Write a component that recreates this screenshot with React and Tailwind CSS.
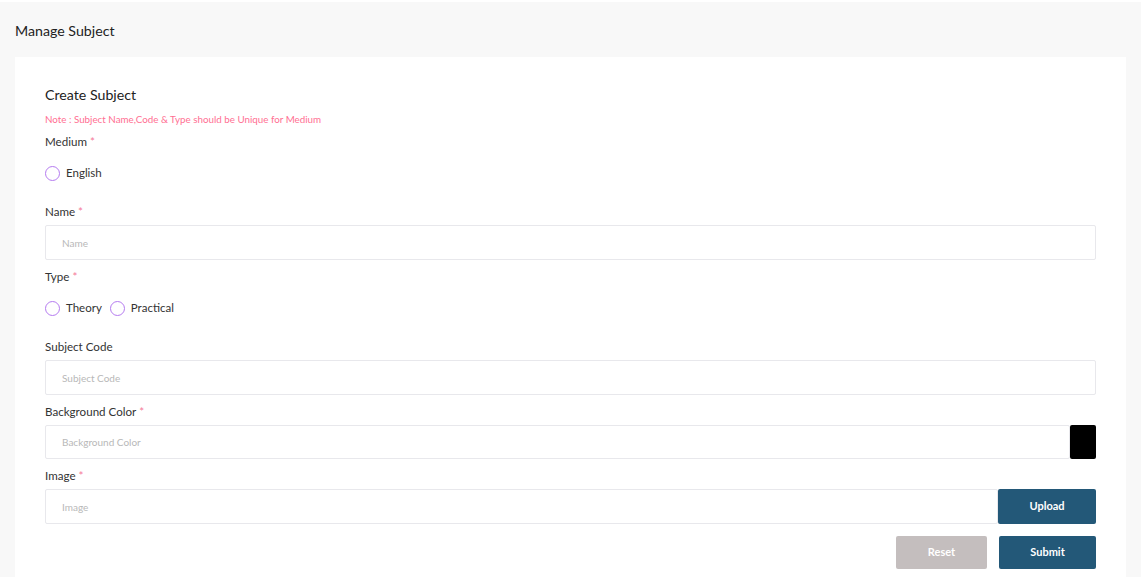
import { useState } from 'react';

function Label({ text, required }) {
  return (
    <div className="h-[14px] text-[11.6px] leading-[14px] text-[#333]">
      {text}
      {required && <span className="ml-[3px] text-[#f57a9a]">*</span>}
    </div>
  );
}

function Radio({ label, checked, onChange }) {
  return (
    <label className="flex items-center gap-[6px] cursor-pointer">
      <span
        className={`w-[15px] h-[15px] rounded-full border-[1.5px] border-[#b57bf0] ${checked ? 'bg-[#b57bf0]' : 'bg-white'}`}
        onClick={onChange}
      />
      <span className="text-[11.5px] leading-[16px] text-[#333]">{label}</span>
    </label>
  );
}

function TextInput({ placeholder, tall = true, className = '' }) {
  return (
    <input
      placeholder={placeholder}
      className={`${tall ? 'h-[35px]' : 'h-[34px]'} border border-[#e8e8ec] rounded-[2px] px-[16px] text-[10px] text-[#333] placeholder:text-[#b8b8b8] outline-none ${className}`}
    />
  );
}

export default function App() {
  const [medium, setMedium] = useState('');
  const [type, setType] = useState('');

  return (
    <div
      className="min-h-[577px] bg-[#f8f8f8] border-t-2 border-white"
      style={{ fontFamily: 'Lato, "Noto Sans", sans-serif' }}
    >
      <div className="h-[55px] px-[15px] pt-[20px]">
        <h1 className="text-[14.2px] leading-[18px] text-[#222]">Manage Subject</h1>
      </div>

      <div className="mx-[15px] bg-white px-[30px] pt-[28px] pb-[10px] flex flex-col">
        <h2 className="h-[20px] text-[14.2px] leading-[20px] text-[#222]">Create Subject</h2>
        <p className="mt-[7px] h-[14px] text-[9.8px] leading-[14px] text-[#ff6f93]">
          Note : Subject Name,Code &amp; Type should be Unique for Medium
        </p>

        <div className="mt-[9px]">
          <Label text="Medium" required />
        </div>
        <div className="mt-[16px] flex gap-[9px]">
          <Radio label="English" checked={medium === 'en'} onChange={() => setMedium('en')} />
        </div>

        <div className="mt-[24px]">
          <Label text="Name" required />
        </div>
        <TextInput placeholder="Name" className="mt-[6px] w-full" />

        <div className="mt-[10px]">
          <Label text="Type" required />
        </div>
        <div className="mt-[16px] flex gap-[8px]">
          <Radio label="Theory" checked={type === 'theory'} onChange={() => setType('theory')} />
          <Radio label="Practical" checked={type === 'practical'} onChange={() => setType('practical')} />
        </div>

        <div className="mt-[24px]">
          <Label text="Subject Code" />
        </div>
        <TextInput placeholder="Subject Code" className="mt-[6px] w-full" />

        <div className="mt-[10px]">
          <Label text="Background Color" required />
        </div>
        <div className="mt-[6px] flex">
          <TextInput placeholder="Background Color" tall={false} className="flex-1 min-w-0" />
          <div className="w-[26px] h-[34px] bg-black rounded-[2px]" />
        </div>

        <div className="mt-[10px]">
          <Label text="Image" required />
        </div>
        <div className="mt-[6px] flex">
          <TextInput placeholder="Image" className="flex-1 min-w-0" />
          <button className="w-[98px] h-[35px] bg-[#235878] text-white text-[11px] font-bold rounded-[2px]">
            Upload
          </button>
        </div>

        <div className="mt-[12px] flex justify-end gap-[12px]">
          <button className="w-[91px] h-[33px] bg-[#c4bebe] text-white text-[11px] font-bold rounded-[2px]">
            Reset
          </button>
          <button className="w-[97px] h-[33px] bg-[#235878] text-white text-[11px] font-bold rounded-[2px]">
            Submit
          </button>
        </div>
      </div>
    </div>
  );
}
